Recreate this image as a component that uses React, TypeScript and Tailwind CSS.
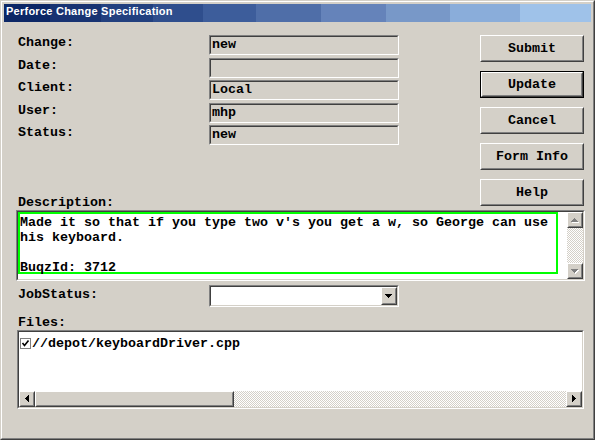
import React from "react";

const mono = "font-['Liberation_Mono',monospace] font-bold text-[13.33px] leading-[15px] text-black";

function Sunken({ className = "", innerClassName = "", children }: { className?: string; innerClassName?: string; children?: React.ReactNode }) {
  return (
    <div className={`border border-t-[#808080] border-l-[#808080] border-b-white border-r-white ${className}`}>
      <div className={`h-full w-full border border-t-[#404040] border-l-[#404040] border-b-[#d4d0c8] border-r-[#d4d0c8] ${innerClassName}`}>
        {children}
      </div>
    </div>
  );
}

function Raised({ className = "", innerClassName = "", children }: { className?: string; innerClassName?: string; children?: React.ReactNode }) {
  return (
    <div className={`border border-t-white border-l-white border-b-[#404040] border-r-[#404040] bg-[#d4d0c8] ${className}`}>
      <div className={`flex h-full w-full items-center justify-center border border-t-[#d4d0c8] border-l-[#d4d0c8] border-b-[#808080] border-r-[#808080] ${innerClassName}`}>
        {children}
      </div>
    </div>
  );
}

function Arrow({ dir, disabled = false }: { dir: "up" | "down" | "left" | "right"; disabled?: boolean }) {
  const pts: Record<string, string> = {
    up: "3.5,0 7,4 0,4",
    down: "0,0 7,0 3.5,4",
    left: "4,0 4,7 0,3.5",
    right: "0,0 0,7 4,3.5",
  };
  const vertical = dir === "up" || dir === "down";
  const w = vertical ? 8 : 5;
  const h = vertical ? 5 : 8;
  return (
    <svg width={w} height={h} viewBox={`0 0 ${w} ${h}`} shapeRendering="crispEdges">
      {disabled && <polygon points={pts[dir]} fill="#ffffff" transform="translate(1,1)" />}
      <polygon points={pts[dir]} fill={disabled ? "#808080" : "#000000"} />
    </svg>
  );
}

const checker = "bg-[repeating-conic-gradient(#d4d0c8_0%_25%,#ffffff_0%_50%)] bg-[length:2px_2px]";

function Field({ label, value }: { label: string; value: string }) {
  return (
    <div className="flex h-[20px] items-start">
      <div className={`w-[191px] ${mono}`}>{label}</div>
      <Sunken className="h-[20px] w-[190px]" innerClassName={`bg-[#d4d0c8] pl-[1px] ${mono}`}>
        {value}
      </Sunken>
    </div>
  );
}

function Btn({ label, def = false }: { label: string; def?: boolean }) {
  if (def) {
    return (
      <div className="h-[27px] w-[104px] border border-black">
        <Raised className="h-full w-full">
          <span className={mono}>{label}</span>
        </Raised>
      </div>
    );
  }
  return (
    <Raised className="h-[27px] w-[104px]">
      <span className={mono}>{label}</span>
    </Raised>
  );
}

const titleBlocks = [
  "w-[46px] bg-[#0c2766]",
  "w-[51px] bg-[#183372]",
  "w-[52px] bg-[#22407f]",
  "w-[50px] bg-[#2f4e8d]",
  "w-[53px] bg-[#3d5d9b]",
  "w-[65px] bg-[#4f6ea8]",
  "w-[65px] bg-[#6583ba]",
  "w-[64px] bg-[#7898c8]",
  "w-[70px] bg-[#8aadda]",
  "w-[71px] bg-[#9fc2e9]",
];

export default function App() {
  return (
    <div className="h-[440px] w-[595px] border border-t-[#d4d0c8] border-l-[#d4d0c8] border-b-[#404040] border-r-[#404040] bg-[#d4d0c8]">
      <div className="flex h-full w-full flex-col border border-t-white border-l-white border-b-[#808080] border-r-[#808080] p-[2px]">
        {/* Title bar */}
        <div className="relative h-[18px] w-full shrink-0">
          <div className="absolute inset-0 flex">
            {titleBlocks.map((c, i) => (
              <div key={i} className={`h-full ${c}`} />
            ))}
          </div>
          <div className="relative pl-[2px] pt-[1px] font-['Liberation_Sans',Arial,sans-serif] text-[11px] font-bold leading-[13px] tracking-[0.25px] text-white">
            Perforce Change Specification
          </div>
        </div>

        {/* Content */}
        <div className="flex flex-col pl-[14px] pr-[7px]">
          {/* Top section */}
          <div className="flex items-stretch pt-[13px]">
            <div className="flex w-[381px] flex-col">
              <div className="flex flex-col gap-[2.5px]">
                <Field label="Change:" value="new" />
                <Field label="Date:" value="" />
                <Field label="Client:" value="Local" />
                <Field label="User:" value="mhp" />
                <Field label="Status:" value="new" />
              </div>
              <div className={`mt-auto ${mono}`}>Description:</div>
            </div>
            <div className="ml-[81px] flex flex-col gap-[9px] pb-[4px]">
              <Btn label="Submit" />
              <Btn label="Update" def />
              <Btn label="Cancel" />
              <Btn label="Form Info" />
              <Btn label="Help" />
            </div>
          </div>

          {/* Description textarea */}
          <Sunken className="ml-[-2px] h-[71px] w-[569px]" innerClassName="flex bg-white">
            <div className="flex flex-1 flex-col">
              <div className={`h-[62px] w-[540px] border-2 border-[#00ff00] pt-[0.5px] whitespace-pre ${mono}`}>
                {"Made it so that if you type two v's you get a w, so George can use\nhis keyboard.\n\nBuqzId: 3712"}
              </div>
            </div>
            <div className="flex w-[16px] flex-col">
              <Raised className="h-[16px] w-[16px]">
                <Arrow dir="up" disabled />
              </Raised>
              <div className={`flex-1 ${checker}`} />
              <Raised className="h-[16px] w-[16px]">
                <Arrow dir="down" disabled />
              </Raised>
            </div>
          </Sunken>

          {/* JobStatus */}
          <div className="mt-[4px] flex items-start">
            <div className={`mt-[2px] w-[191px] ${mono}`}>JobStatus:</div>
            <Sunken className="h-[22px] w-[190px]" innerClassName="flex justify-end bg-white">
              <Raised className="h-full w-[16px]">
                <Arrow dir="down" />
              </Raised>
            </Sunken>
          </div>

          {/* Files */}
          <div className={`mt-[8px] ${mono}`}>Files:</div>
          <Sunken className="ml-[-1px] h-[79px] w-[567px]" innerClassName="flex flex-col bg-white">
            <div className="flex-1">
              <div className="mt-[4px] flex h-[15px] items-center pl-[1px]">
                <svg width="11" height="11" viewBox="0 0 11 11" className="mr-[1px]" shapeRendering="crispEdges">
                  <rect x="0.5" y="0.5" width="10" height="10" fill="#ffffff" stroke="#808080" />
                  <path d="M2.5 5 L4.5 7.5 L8.5 2.5" fill="none" stroke="#000000" strokeWidth="1.6" shapeRendering="auto" />
                </svg>
                <span className={mono}>//depot/keyboardDriver.cpp</span>
              </div>
            </div>
            <div className="flex h-[16px]">
              <Raised className="h-[16px] w-[16px]">
                <Arrow dir="left" />
              </Raised>
              <Raised className="h-[16px] w-[199px]" />
              <div className={`flex-1 ${checker}`} />
              <Raised className="h-[16px] w-[16px]">
                <Arrow dir="right" />
              </Raised>
            </div>
          </Sunken>
        </div>
      </div>
    </div>
  );
}
